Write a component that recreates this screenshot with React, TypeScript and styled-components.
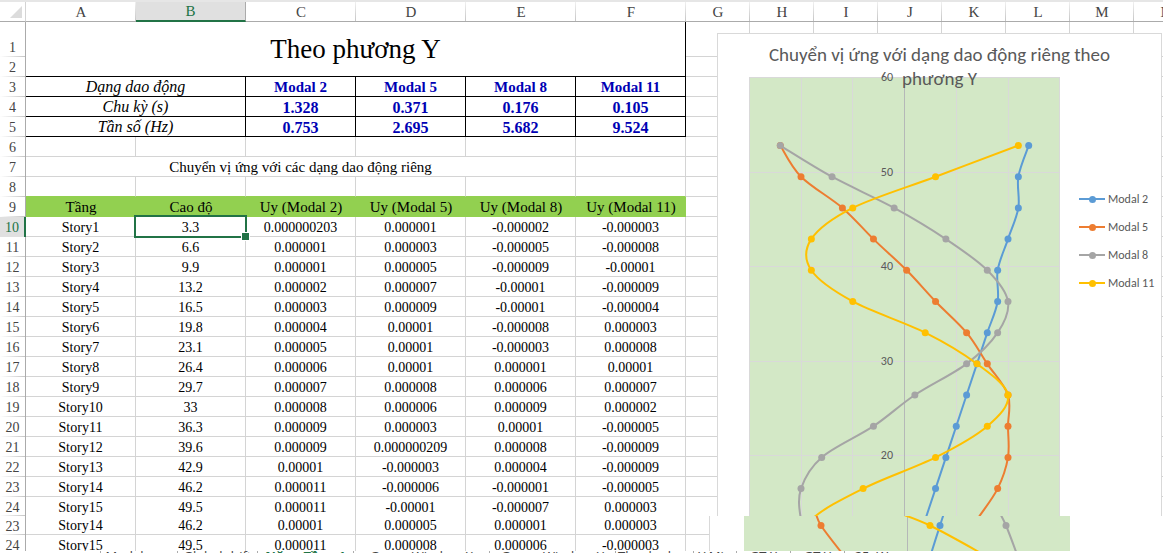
import React from "react";
import styled, { createGlobalStyle, css } from "styled-components";

const GRID = "#d4d4d4";
const EDGE = "#ababab";
const GREEN = "#217346";

const GlobalStyle = createGlobalStyle`
  * { box-sizing: border-box; }
  body {
    margin: 0;
    overflow: hidden;
    background: #fff;
    color: #000;
    font-family: "Liberation Serif", "Times New Roman", serif;
  }
`;

const Workbook = styled.main`
  border-top: 2px solid #e6e6e6;
`;

const Pane = styled.section`
  position: relative;
  overflow: hidden;
`;

const SplitPane = styled(Pane)`
  height: 35px;
  background: #fff;
  z-index: 1;
`;

const Sheet = styled.table`
  width: 100%;
  min-width: 1198px;
  table-layout: fixed;
  border-collapse: separate;
  border-spacing: 0;
  font-size: 14px;
  line-height: 16px;
  text-align: center;
`;

const Col = styled.col<{ $w?: number }>`
  width: ${(p) => (p.$w ? `${p.$w}px` : "auto")};
`;

const Row = styled.tr<{ $h?: number }>`
  height: ${(p) => p.$h ?? 20}px;
`;

const Corner = styled.th`
  padding: 0;
  border-right: 1px solid ${GRID};
  border-bottom: 1px solid ${EDGE};

  svg {
    display: block;
    margin: 0 3px 0 auto;
  }
`;

const ColHead = styled.th<{ $active?: boolean }>`
  padding: 0;
  font-size: 15px;
  font-weight: 400;
  color: #444;
  border-bottom: 1px solid ${EDGE};
  background: linear-gradient(#f0f0f0, #c6c6c6) right / 1px 100% no-repeat;
  ${(p) =>
    p.$active &&
    css`
      color: ${GREEN};
      background: #e0e0e0;
      border-right: 1px solid ${EDGE};
      border-bottom: 2px solid ${GREEN};
    `}
`;

const RowHead = styled.th<{ $active?: boolean; $low?: boolean }>`
  padding: ${(p) => (p.$low ? 16 : 2)}px 0 0;
  font-weight: 400;
  color: #444;
  border-right: 1px solid ${EDGE};
  background: linear-gradient(to right, #fff, #c6c6c6) bottom / 100% 1px no-repeat;
  ${(p) =>
    p.$active &&
    css`
      color: ${GREEN};
      background: #e0e0e0;
      border-right: 2px solid ${GREEN};
    `}
`;

const Cell = styled.td`
  position: relative;
  padding: 2px 0 0;
  white-space: nowrap;
  border-right: 1px solid ${GRID};
  border-bottom: 1px solid ${GRID};
`;

const OpenCell = styled(Cell)`
  border-bottom: 0;
`;

const TitleCell = styled(Cell)`
  padding: 0;
  font-size: 27px;
  line-height: 32px;
  border-color: #000;
`;

const CaptionCell = styled(Cell)`
  padding: 0;
  font-size: 15px;
`;

const LabelCell = styled(Cell)`
  padding: 0;
  font-size: 16px;
  font-style: italic;
  border-color: #000;
`;

const ModalCell = styled(Cell)<{ $name?: boolean }>`
  padding-top: ${(p) => (p.$name ? 0 : 2)}px;
  font-size: ${(p) => (p.$name ? 15 : 16)}px;
  font-weight: 700;
  color: #0000b4;
  border-color: #000;
`;

const HeadCell = styled.th`
  padding: 0;
  font-size: 15px;
  font-weight: 400;
  background: #92d050;
  border-bottom: 1px solid #92d050;
`;

const AboveHeadCell = styled(Cell)`
  border-bottom-color: #92d050;
`;

const Selection = styled.span`
  position: absolute;
  inset: -2px;
  border: 2px solid ${GREEN};
  z-index: 1;

  &::after {
    content: "";
    position: absolute;
    right: -5px;
    bottom: -5px;
    width: 7px;
    height: 7px;
    background: ${GREEN};
    border: 1px solid #fff;
  }
`;

const ChartCard = styled.figure`
  position: absolute;
  top: 31px;
  left: 717px;
  width: 445px;
  height: 520px;
  margin: 0;
  padding: 43px 0 0 31px;
  display: flex;
  background: #fff;
  border: 1px solid #d9d9d9;
  color: #595959;
  font-family: Carlito, Lato, sans-serif;
`;

const ChartTitle = styled.figcaption`
  position: absolute;
  top: 9px;
  left: 40px;
  right: 40px;
  text-align: center;
  font-size: 19px;
  line-height: 24px;
`;

const Plot = styled.svg`
  flex: none;
  display: block;
  overflow: hidden;

  text {
    font-size: 12px;
    fill: #595959;
    text-anchor: end;
  }
`;

const Legend = styled.ul`
  margin: 108px 0 0 19px;
  padding: 0;
  list-style: none;
`;

const LegendItem = styled.li`
  display: flex;
  align-items: center;
  gap: 3px;
  height: 28px;
  font-size: 12px;
  white-space: nowrap;
`;

const TopTick = styled.span`
  position: absolute;
  top: 36px;
  left: 163px;
  font-size: 12px;
  line-height: 14px;
`;

const LowerChart = styled.figure`
  position: absolute;
  top: 0;
  left: 709px;
  right: 0;
  margin: 0;
  padding-left: 34px;
  background: #fff;
  border-left: 1px solid #d9d9d9;
`;

const Tabs = styled.nav`
  display: flex;
  align-items: flex-start;
  margin-top: -2px;
  padding-left: 100px;
`;

const Tab = styled.button<{ $active?: boolean; $w: number }>`
  flex: none;
  width: ${(p) => p.$w}px;
  padding: 0;
  border: 0;
  border-left: 1px solid ${EDGE};
  background: none;
  font: ${(p) => (p.$active ? 700 : 400)} 13px/15px "Open Sans", sans-serif;
  color: ${(p) => (p.$active ? GREEN : "#444")};
`;

const COLUMNS = ["A", "B", "C", "D", "E", "F", "G", "H", "I", "J", "K", "L", "M", "N"];

const MODAL_ROWS = [
  ["Dạng dao động", "Modal 2", "Modal 5", "Modal 8", "Modal 11"],
  ["Chu kỳ (s)", "1.328", "0.371", "0.176", "0.105"],
  ["Tần số (Hz)", "0.753", "2.695", "5.682", "9.524"],
];

const HEADINGS = ["Tầng", "Cao độ", "Uy (Modal 2)", "Uy (Modal 5)", "Uy (Modal 8)", "Uy (Modal 11)"];

const STORIES = [
  ["Story1", "3.3", "0.000000203", "0.000001", "-0.000002", "-0.000003"],
  ["Story2", "6.6", "0.000001", "0.000003", "-0.000005", "-0.000008"],
  ["Story3", "9.9", "0.000001", "0.000005", "-0.000009", "-0.00001"],
  ["Story4", "13.2", "0.000002", "0.000007", "-0.00001", "-0.000009"],
  ["Story5", "16.5", "0.000003", "0.000009", "-0.00001", "-0.000004"],
  ["Story6", "19.8", "0.000004", "0.00001", "-0.000008", "0.000003"],
  ["Story7", "23.1", "0.000005", "0.00001", "-0.000003", "0.000008"],
  ["Story8", "26.4", "0.000006", "0.00001", "0.000001", "0.00001"],
  ["Story9", "29.7", "0.000007", "0.000008", "0.000006", "0.000007"],
  ["Story10", "33", "0.000008", "0.000006", "0.000009", "0.000002"],
  ["Story11", "36.3", "0.000009", "0.000003", "0.00001", "-0.000005"],
  ["Story12", "39.6", "0.000009", "0.000000209", "0.000008", "-0.000009"],
  ["Story13", "42.9", "0.00001", "-0.000003", "0.000004", "-0.000009"],
  ["Story14", "46.2", "0.000011", "-0.000006", "-0.000001", "-0.000005"],
  ["Story15", "49.5", "0.000011", "-0.00001", "-0.000007", "0.000003"],
];

const LOWER_ROWS = [
  { n: 23, h: 19, cells: ["Story14", "46.2", "0.00001", "0.000005", "0.000001", "0.000003"] },
  { n: 24, h: 20, cells: ["Story15", "49.5", "0.000011", "0.000008", "0.000006", "-0.000003"] },
];

const ROOF = ["Roof", "52.8", "0.000012", "-0.000012", "-0.000012", "0.000011"];

const SERIES = [
  { name: "Modal 2", color: "#5b9bd5" },
  { name: "Modal 5", color: "#ed7d31" },
  { name: "Modal 8", color: "#a5a5a5" },
  { name: "Modal 11", color: "#ffc000" },
];

type Point = [number, number];

/* Smoothed line through the points, with the tangents that spreadsheets use. */
function smoothPath(pts: Point[]): string {
  let d = `M${pts[0][0]} ${pts[0][1]}`;
  for (let i = 0; i < pts.length - 1; i++) {
    const a = pts[Math.max(i - 1, 0)];
    const b = pts[i];
    const c = pts[i + 1];
    const e = pts[Math.min(i + 2, pts.length - 1)];
    d += `C${b[0] + (c[0] - a[0]) / 6} ${b[1] + (c[1] - a[1]) / 6} `;
    d += `${c[0] - (e[0] - b[0]) / 6} ${c[1] - (e[1] - b[1]) / 6} ${c[0]} ${c[1]}`;
  }
  return d;
}

const toPoint = (height: number, value: number): Point => [
  155.5 + value * 10.35e6,
  0.5 + (60 - height) * 9.45,
];

const seriesPoints = (index: number) =>
  [...STORIES, ROOF].map((s) => toPoint(Number(s[1]), Number(s[index + 2])));

function Line({ points, color }: { points: Point[]; color: string }) {
  return (
    <g>
      <path d={smoothPath(points)} fill="none" stroke={color} strokeWidth="2" />
      {points.map(([x, y]) => (
        <circle key={`${x}-${y}`} cx={x} cy={y} r="3.5" fill={color} />
      ))}
    </g>
  );
}

function MainPlot() {
  return (
    <Plot width="311" height="477" role="img" aria-label="Chuyển vị theo cao độ">
      <rect width="311" height="477" fill="#d3e8c6" />
      {[0, 1, 2, 4, 5, 6].map((i) => {
        const x = Math.round(i * 51.7) + 0.5;
        return <path key={i} d={`M${x} 0V477`} stroke="#d9d9d9" />;
      })}
      {[60, 50, 40, 30, 20].map((v) => {
        const y = Math.round((60 - v) * 9.45) + 0.5;
        return <path key={v} d={`M0 ${y}H311`} stroke="#d9d9d9" />;
      })}
      <path d="M155.5 0V477" stroke="#b5b8b8" />
      {[50, 40, 30, 20].map((v) => (
        <text key={v} x="144" y={Math.round((60 - v) * 9.45) + 4}>
          {v}
        </text>
      ))}
      {SERIES.map((s, i) => (
        <Line key={s.name} points={seriesPoints(i)} color={s.color} />
      ))}
    </Plot>
  );
}

const LOWER_LINES: { color: string; points: Point[] }[] = [
  { color: "#5b9bd5", points: [[201, -6], [196, 9.5], [186, 41]] },
  { color: "#ed7d31", points: [[71, -6], [77, 9.5], [101, 41]] },
  { color: "#a5a5a5", points: [[253, -8], [262, 9.5], [274, 41]] },
  { color: "#ffc000", points: [[146, -6], [186, 9.5], [244, 41]] },
];

function LowerPlot() {
  return (
    <Plot width="326" height="36" role="img" aria-label="Chuyển vị, phần dưới">
      <rect width="326" height="36" fill="#d3e8c6" />
      <path d="M163.5 0V36" stroke="#b5b8b8" />
      {LOWER_LINES.map((l) => (
        <g key={l.color}>
          <path d={smoothPath(l.points)} fill="none" stroke={l.color} strokeWidth="2" />
          <circle cx={l.points[1][0]} cy={l.points[1][1]} r="3.5" fill={l.color} />
        </g>
      ))}
    </Plot>
  );
}

function SheetColumns() {
  return (
    <colgroup>
      <Col $w={26} />
      {COLUMNS.map((c, i) => (
        <Col key={c} $w={i < 6 ? 110 : 64} />
      ))}
      <Col />
    </colgroup>
  );
}

function Blanks({ count, as: C = Cell }: { count: number; as?: typeof Cell }) {
  return (
    <>
      {Array.from({ length: count }, (_, i) => (
        <C key={i} />
      ))}
    </>
  );
}

/* Columns G to N and the stretch column that fills wide windows. */
const REST = 9;

const TABS: [string, number][] = [
  ["Modal mas", 77],
  ["Global drift", 80],
  ["Năm. Tầng 1", 96],
  ["Group Wind on X", 136],
  ["Group Wind on Y", 126],
  ["Thanh phan", 78],
  ["Y Min", 43],
  ["GT X", 54],
  ["GT Y", 54],
  ["25. W", 54],
];

export default function App() {
  return (
    <>
      <GlobalStyle />
      <Workbook>
        <Pane>
          <Sheet>
            <SheetColumns />
            <thead>
              <Row>
                <Corner aria-label="Select all">
                  <svg width="12" height="12">
                    <path d="M12 0V12H0Z" fill="#dcdcdc" />
                  </svg>
                </Corner>
                {COLUMNS.map((c) => (
                  <ColHead key={c} scope="col" $active={c === "B"}>
                    {c}
                  </ColHead>
                ))}
                <ColHead scope="col" />
              </Row>
            </thead>
            <tbody>
              <Row $h={35}>
                <RowHead scope="row" $low>
                  1
                </RowHead>
                <TitleCell colSpan={6} rowSpan={2}>
                  Theo phương Y
                </TitleCell>
                <Blanks count={REST} />
              </Row>
              <Row>
                <RowHead scope="row">2</RowHead>
                <Blanks count={REST} />
              </Row>
              {MODAL_ROWS.map(([label, ...values], i) => (
                <Row key={label}>
                  <RowHead scope="row">{i + 3}</RowHead>
                  <LabelCell colSpan={2}>{label}</LabelCell>
                  {values.map((v) => (
                    <ModalCell key={v} $name={i === 0}>
                      {v}
                    </ModalCell>
                  ))}
                  <Blanks count={REST} />
                </Row>
              ))}
              <Row>
                <RowHead scope="row">6</RowHead>
                <Blanks count={6 + REST} />
              </Row>
              <Row>
                <RowHead scope="row">7</RowHead>
                <CaptionCell colSpan={5}>Chuyển vị ứng với các dạng dao động riêng</CaptionCell>
                <Blanks count={1 + REST} />
              </Row>
              <Row>
                <RowHead scope="row">8</RowHead>
                <Blanks count={6} as={AboveHeadCell} />
                <Blanks count={REST} />
              </Row>
              <Row>
                <RowHead scope="row">9</RowHead>
                {HEADINGS.map((h) => (
                  <HeadCell key={h} scope="col">
                    {h}
                  </HeadCell>
                ))}
                <Blanks count={REST} />
              </Row>
              {STORIES.map((cells, r) => {
                const last = r === STORIES.length - 1;
                const C = last ? OpenCell : Cell;
                return (
                  <Row key={cells[0]} $h={last ? 19 : 20}>
                    <RowHead scope="row" $active={r === 0}>
                      {r + 10}
                    </RowHead>
                    {cells.map((v, c) => (
                      <C key={c}>
                        {v}
                        {r === 0 && c === 1 && <Selection />}
                      </C>
                    ))}
                    <Blanks count={REST} as={C} />
                  </Row>
                );
              })}
            </tbody>
          </Sheet>
          <ChartCard>
            <MainPlot />
            <TopTick>60</TopTick>
            <ChartTitle>Chuyển vị ứng với dạng dao động riêng theo phương Y</ChartTitle>
            <Legend>
              {SERIES.map((s) => (
                <LegendItem key={s.name}>
                  <svg width="26" height="8" aria-hidden="true">
                    <path d="M0 4H26" stroke={s.color} strokeWidth="2" />
                    <circle cx="13.5" cy="4.5" r="3.5" fill={s.color} />
                  </svg>
                  {s.name}
                </LegendItem>
              ))}
            </Legend>
          </ChartCard>
        </Pane>
        <SplitPane>
          <Sheet>
            <SheetColumns />
            <tbody>
              {LOWER_ROWS.map((row) => (
                <Row key={row.n} $h={row.h}>
                  <RowHead scope="row">{row.n}</RowHead>
                  {row.cells.map((v, c) => (
                    <Cell key={c}>{v}</Cell>
                  ))}
                  <Blanks count={REST} />
                </Row>
              ))}
            </tbody>
          </Sheet>
          <LowerChart>
            <LowerPlot />
          </LowerChart>
        </SplitPane>
        <Tabs aria-label="Sheets">
          {TABS.map(([name, w]) => (
            <Tab key={name} type="button" $w={w} $active={name.startsWith("Năm")}>
              {name}
            </Tab>
          ))}
        </Tabs>
      </Workbook>
    </>
  );
}
